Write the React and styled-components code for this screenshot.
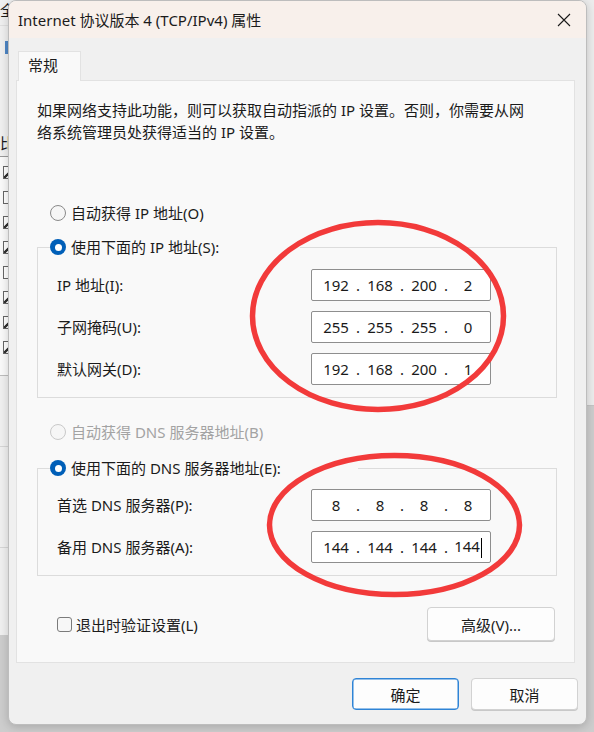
import React from 'react'
import styled, { createGlobalStyle } from 'styled-components'

const FONT = `"Noto Sans", "Noto Sans CJK SC", sans-serif`
const TEXT_COLOR = '#1b1b1b'
const PANEL_BORDER = '#e2e2e2'

const GlobalStyle = createGlobalStyle`
  html, body {
    margin: 0;
    padding: 0;
  }
  body {
    font-family: ${FONT};
    color: ${TEXT_COLOR};
    background: #cdcdcd;
  }
`

const Desktop = styled.div`
  position: relative;
  width: 594px;
  height: 732px;
  overflow: hidden;
  background: #cdcdcd;
`

// windows lying behind the dialog, only a few pixels of them show
const BackWindow = styled.div`
  position: absolute;
  left: 0;
  top: 0;
  width: 200px;
  height: 635px;
  background: #f0f0f0;
  display: flex;
  flex-direction: column;
  font-size: 15px;
  line-height: 18px;
`
const BackHeading = styled.div`
  padding: 1px 0 0 0;
  height: 24px;
  border-bottom: 1px solid #e0e0e0;
`
const BackIcon = styled.div`
  margin: 15px 0 0 5px;
  width: 10px;
  height: 13px;
  background: #4f86c6;
`
const BackLabel = styled.div`
  margin-top: 80px;
`
const BackList = styled.div`
  margin-top: 4px;
  height: 220px;
  border-top: 1px solid #9a9a9a;
  border-bottom: 1px solid #bdbdbd;
  background: #fafafa;
  display: flex;
  flex-direction: column;
  gap: 12px;
  padding: 9px 0 0 3px;
  box-sizing: border-box;
`
const BackCheck = styled.div`
  width: 11px;
  height: 11px;
  border: 1px solid #666;
  background: ${(p) => (p.$on ? 'linear-gradient(135deg, #fff 40%, #333 45%, #333 55%, #fff 60%)' : '#fff')};
`
const BackFooter = styled.div`
  margin-top: 70px;
  height: 100px;
  border-top: 1px solid #d6d6d6;
  border-bottom: 1px solid #d6d6d6;
`
const RightWindow = styled.div`
  position: absolute;
  left: 560px;
  top: 0;
  width: 100px;
  height: 405px;
  background: #ececec;
  border-bottom: 1px solid #c4c4c4;
`

const Dialog = styled.div`
  position: absolute;
  left: 8px;
  top: 0;
  width: 579px;
  height: 725px;
  box-sizing: border-box;
  display: flex;
  flex-direction: column;
  background: #f0f0f0;
  border: 1px solid #bdbdbd;
  border-radius: 8px;
  overflow: hidden;
  box-shadow: 0 2px 10px rgba(0, 0, 0, 0.18);
`

const TitleBar = styled.div`
  height: 37px;
  flex: none;
  display: flex;
  align-items: center;
  padding-left: 9px;
  background: #f8f0eb;
  font-size: 15px;
`
const Title = styled.div`
  flex: 1;
`
const CloseButton = styled.div`
  width: 44px;
  height: 37px;
  display: flex;
  align-items: center;
  justify-content: center;
`

const Body = styled.div`
  flex: 1;
  display: flex;
  flex-direction: column;
  padding: 13px 11px 0 7px;
`

const Tab = styled.div`
  align-self: flex-start;
  margin-left: 2px;
  margin-bottom: -1px;
  position: relative;
  z-index: 1;
  width: 63px;
  height: 30px;
  box-sizing: border-box;
  padding: 3px 0 0 9px;
  background: #f9f9f9;
  border: 1px solid ${PANEL_BORDER};
  border-bottom: none;
  font-size: 15px;
  line-height: 20px;
`

const Panel = styled.div`
  display: flex;
  flex-direction: column;
  padding: 18px 17px 21px 20px;
  background: #f9f9f9;
  border: 1px solid ${PANEL_BORDER};
  font-size: 15px;
`

const Description = styled.p`
  margin: 0;
  line-height: 22px;
  white-space: nowrap;
`

const RadioRow = styled.label`
  display: flex;
  align-items: center;
  gap: 5px;
  height: 20px;
  margin: ${(p) => p.$margin || '0'};
  margin-left: ${(p) => (p.$inLegend ? '0' : '13px')};
  color: ${(p) => (p.$disabled ? '#a3a3a3' : TEXT_COLOR)};
  line-height: 20px;
`
const RadioMark = styled.span`
  flex: none;
  width: 16px;
  height: 16px;
  box-sizing: border-box;
  border-radius: 50%;
  display: flex;
  align-items: center;
  justify-content: center;
  border: ${(p) => (p.$checked ? 'none' : `1px solid ${p.$disabled ? '#c9c9c9' : '#8a8a8a'}`)};
  background: ${(p) => (p.$checked ? '#005fb8' : '#f6f6f6')};

  &::after {
    content: '';
    display: ${(p) => (p.$checked ? 'block' : 'none')};
    width: 7px;
    height: 7px;
    border-radius: 50%;
    background: #fff;
  }
`

const Group = styled.fieldset`
  margin: ${(p) => p.$margin || '0'};
  padding: ${(p) => p.$padTop || '12px'} 0 12px 19px;
  min-width: 0;
  border: 1px solid #dcdcdc;
  display: grid;
  grid-template-columns: 254px 180px;
  row-gap: 10px;
  align-items: center;
`
const Legend = styled.legend`
  margin-left: -7px;
  padding: 0;
  width: ${(p) => p.$width}px;
`

const FieldLabel = styled.div`
  line-height: 20px;
`

const IpBox = styled.div`
  width: 180px;
  height: 32px;
  box-sizing: border-box;
  display: flex;
  align-items: center;
  padding-left: 6px;
  background: #fff;
  border: 1px solid #8e8e8e;
  border-radius: 2px;
  font-size: 15px;
  color: #1a1a1a;
`
const Octet = styled.span`
  width: 36px;
  text-align: center;
  white-space: nowrap;
`
const Dot = styled.span`
  width: 8px;
  text-align: center;
`
const Caret = styled.span`
  display: inline-block;
  width: 1px;
  height: 20px;
  margin-left: 1px;
  vertical-align: middle;
  background: #000;
`

const BottomRow = styled.div`
  margin-top: 31px;
  height: 34px;
  display: flex;
  align-items: center;
  padding: 0 2px 0 20px;
`
const CheckRow = styled.label`
  display: flex;
  align-items: center;
  gap: 4px;
  flex: 1;
`
const CheckMark = styled.span`
  width: 15px;
  height: 15px;
  box-sizing: border-box;
  border: 1px solid #7b7b7b;
  border-radius: 3px;
  background: #f7f7f7;
`

const Button = styled.button`
  width: ${(p) => p.$width || 107}px;
  height: ${(p) => p.$height || 32}px;
  box-sizing: border-box;
  padding: 0;
  background: #fdfdfd;
  border: 1px solid ${(p) => (p.$primary ? '#2f84d6' : '#d2d2d2')};
  box-shadow: ${(p) => (p.$primary ? 'inset 0 0 0 0.5px #2f84d6' : '0 1px 0 #c8c8c8')};
  border-radius: 4px;
  font-family: ${FONT};
  font-size: 15px;
  color: ${TEXT_COLOR};
`

const DialogButtons = styled.div`
  margin: 15px -3px 0 0;
  display: flex;
  justify-content: flex-end;
  gap: 12px;
`

const Markup = styled.svg`
  position: absolute;
  left: 0;
  top: 0;
  pointer-events: none;
`

function IpInput({ value, caret }) {
  const parts = value.split('.')
  return (
    <IpBox>
      {parts.map((part, i) => (
        <React.Fragment key={i}>
          {i > 0 && <Dot>.</Dot>}
          <Octet>
            {part}
            {caret && i === parts.length - 1 && <Caret />}
          </Octet>
        </React.Fragment>
      ))}
    </IpBox>
  )
}

function Radio({ children, checked, disabled, inLegend, margin }) {
  return (
    <RadioRow $disabled={disabled} $inLegend={inLegend} $margin={margin}>
      <RadioMark $checked={checked} $disabled={disabled} />
      {children}
    </RadioRow>
  )
}

const BACK_CHECKS = [true, false, true, true, false, true, true, true]

export default function App() {
  return (
    <>
      <GlobalStyle />
      <Desktop>
        <BackWindow>
          <BackHeading>全</BackHeading>
          <BackIcon />
          <BackLabel>比</BackLabel>
          <BackList>
            {BACK_CHECKS.map((on, i) => (
              <BackCheck key={i} $on={on} />
            ))}
          </BackList>
          <BackFooter />
        </BackWindow>
        <RightWindow />

        <Dialog>
          <TitleBar>
            <Title>Internet 协议版本 4 (TCP/IPv4) 属性</Title>
            <CloseButton>
              <svg width="14" height="14" viewBox="0 0 14 14">
                <path d="M1 1 L13 13 M13 1 L1 13" stroke="#1a1a1a" strokeWidth="1.1" fill="none" />
              </svg>
            </CloseButton>
          </TitleBar>

          <Body>
            <Tab>常规</Tab>
            <Panel>
              <Description>
                如果网络支持此功能，则可以获取自动指派的 IP 设置。否则，你需要从网
                <br />
                络系统管理员处获得适当的 IP 设置。
              </Description>

              <Radio margin="60px 0 14px">自动获得 IP 地址(O)</Radio>
              <Group>
                <Legend $width={250}>
                  <Radio checked inLegend>使用下面的 IP 地址(S):</Radio>
                </Legend>
                <FieldLabel>IP 地址(I):</FieldLabel>
                <IpInput value="192.168.200.2" />
                <FieldLabel>子网掩码(U):</FieldLabel>
                <IpInput value="255.255.255.0" />
                <FieldLabel>默认网关(D):</FieldLabel>
                <IpInput value="192.168.200.1" />
              </Group>

              <Radio disabled margin="24px 0 16px">自动获得 DNS 服务器地址(B)</Radio>
              <Group $padTop="11px">
                <Legend $width={308}>
                  <Radio checked inLegend>使用下面的 DNS 服务器地址(E):</Radio>
                </Legend>
                <FieldLabel>首选 DNS 服务器(P):</FieldLabel>
                <IpInput value="8.8.8.8" />
                <FieldLabel>备用 DNS 服务器(A):</FieldLabel>
                <IpInput value="144.144.144.144" caret />
              </Group>

              <BottomRow>
                <CheckRow>
                  <CheckMark />
                  退出时验证设置(L)
                </CheckRow>
                <Button $width={128} $height={34}>高级(V)...</Button>
              </BottomRow>
            </Panel>

            <DialogButtons>
              <Button $primary>确定</Button>
              <Button>取消</Button>
            </DialogButtons>
          </Body>
        </Dialog>

        <Markup width="594" height="732" viewBox="0 0 594 732">
          <ellipse cx="378" cy="316" rx="125.5" ry="93.5" fill="none" stroke="#f23a3a" strokeWidth="5.5" />
          <ellipse cx="394.5" cy="525" rx="125" ry="69.5" fill="none" stroke="#f23a3a" strokeWidth="5.5" />
        </Markup>
      </Desktop>
    </>
  )
}
